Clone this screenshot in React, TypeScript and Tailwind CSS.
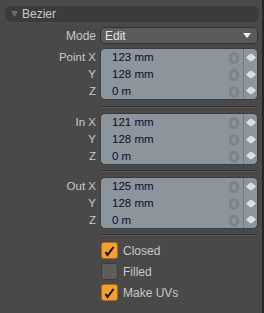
import React from "react";

const groups = [
  { name: "Point", values: ["123 mm", "128 mm", "0 m"] },
  { name: "In", values: ["121 mm", "128 mm", "0 m"] },
  { name: "Out", values: ["125 mm", "128 mm", "0 m"] },
];

const checks = [
  { label: "Closed", on: true },
  { label: "Filled", on: false },
  { label: "Make UVs", on: true },
];

function Arrows() {
  return (
    <svg width="10" height="9" viewBox="0 0 10 9">
      <polygon points="0,4.5 4.5,0.5 4.5,8.5" fill="#dde2e6" />
      <polygon points="5.5,0.5 10,4.5 5.5,8.5" fill="#dde2e6" />
      <rect x="4.5" y="1" width="1" height="7" fill="#fafbfc" />
    </svg>
  );
}

function Separator({ h }: { h: string }) {
  return (
    <div className={`flex items-center ${h}`}>
      <div className="w-[91px]" />
      <div className="ml-[4px] flex-1 mr-[1px] border-t border-t-[#383838] border-b border-b-[#555555]" />
    </div>
  );
}

function Group({ name, values }: { name: string; values: string[] }) {
  const axes = ["X", "Y", "Z"];
  return (
    <div className="flex">
      <div className="w-[91px] flex flex-col pt-[1px]">
        {axes.map((a, i) => (
          <div key={a} className="h-[17px] flex items-center justify-end text-[#c8c8c8] text-[11.5px]">
            {i === 0 ? `${name} ${a}` : a}
          </div>
        ))}
      </div>
      <div className="ml-[4px] mr-[1px] flex-1 h-[52px] rounded-[5px] border border-[#3a3d40] bg-[#8d959c] flex">
        <div className="flex-1 flex flex-col">
          {values.map((v, i) => (
            <div key={i} className="h-[17px] flex items-center pl-[11px] text-[#0c0c2c] text-[11.5px]">
              <span className="flex-1">{v}</span>
              <div className="w-[10px] h-[12px] rounded-full border-[3px] border-[#7c848a] mr-[4px]" />
            </div>
          ))}
        </div>
        <div className="w-[14px] border-l border-l-[#737b81] flex flex-col">
          {values.map((_, i) => (
            <div key={i} className="h-[17px] flex items-center justify-center">
              <Arrows />
            </div>
          ))}
        </div>
      </div>
    </div>
  );
}

export default function App() {
  return (
    <div className="w-[264px] h-[313px] bg-[#494949] border-r-2 border-r-[#262626] pl-[5px] pr-[3px] pt-[6px] font-['Liberation_Sans',Arial,sans-serif] text-[11px] flex flex-col">
      <div className="h-[16px] rounded-[6px] bg-[#3b3b3b] flex items-center pl-[6px] gap-[4px]">
        <svg width="7" height="6" viewBox="0 0 7 6">
          <polygon points="0,0 7,0 3.5,6" fill="#6b6b6b" />
        </svg>
        <span className="text-[#c3cad2] text-[12px]">Bezier</span>
      </div>

      <div className="flex mt-[5px]">
        <div className="w-[91px] h-[17px] flex items-center justify-end text-[#c8c8c8] text-[12px]">Mode</div>
        <div className="ml-[4px] mr-[1px] flex-1 h-[17px] rounded-[5px] border border-[#333333] bg-[#5b5b5b] flex items-center pl-[4px] pr-[6px]">
          <span className="flex-1 text-[#e4e4e4] text-[12px]">Edit</span>
          <svg width="8" height="5" viewBox="0 0 8 5">
            <polygon points="0,0 8,0 4,5" fill="#efefef" />
          </svg>
        </div>
      </div>

      <div className="mt-[4px]">
        <Group {...groups[0]} />
      </div>
      <Separator h="h-[13px]" />
      <Group {...groups[1]} />
      <Separator h="h-[12px]" />
      <Group {...groups[2]} />
      <Separator h="h-[12px]" />

      <div className="flex flex-col gap-[4px] pl-[96px] mt-[1px]">
        {checks.map((c) => (
          <div key={c.label} className="flex items-center gap-[5px] h-[17px]">
            <div
              className={`w-[17px] h-[17px] rounded-[3px] border flex items-center justify-center ${
                c.on ? "bg-[#f2a12e] border-[#a86a18]" : "bg-[#5d5d5d] border-[#3c3c3c]"
              }`}
            >
              {c.on && (
                <svg width="13" height="13" viewBox="0 0 13 13">
                  <path d="M2.5 8 L4.5 11 L10.5 3" stroke="#111" strokeWidth="2" fill="none" />
                </svg>
              )}
            </div>
            <span className="text-[#c8c8c8] text-[12px]">{c.label}</span>
          </div>
        ))}
      </div>
    </div>
  );
}
